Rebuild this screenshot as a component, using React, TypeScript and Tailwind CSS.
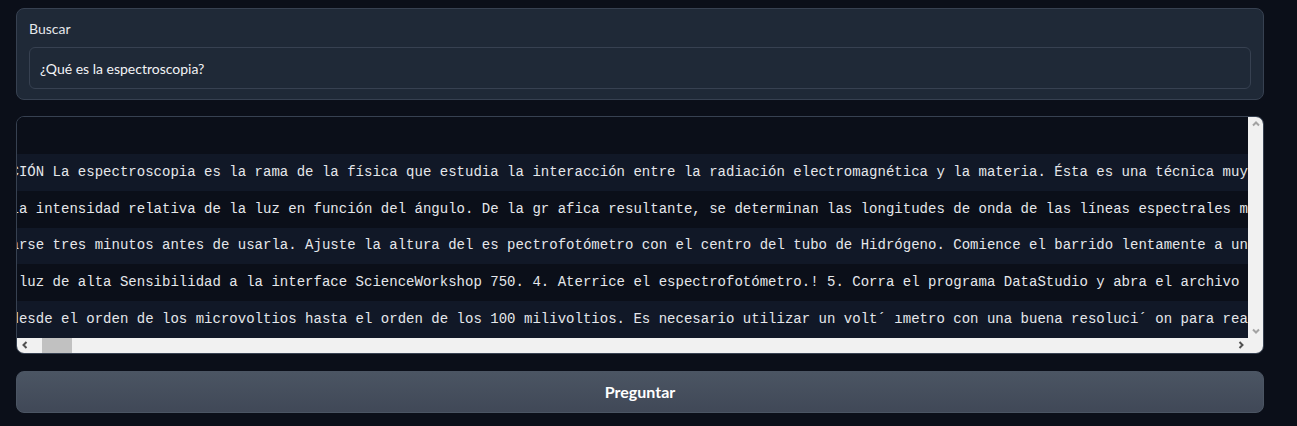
import React from "react";

const rows = [
  "CIÓN La espectroscopia es la rama de la física que estudia la interacción entre la radiación electromagnética y la materia. Ésta es una técnica muy utilizada en la ciencia moderna.",
  "la intensidad relativa de la luz en función del ángulo. De la gr afica resultante, se determinan las longitudes de onda de las líneas espectrales medidas.",
  "arse tres minutos antes de usarla. Ajuste la altura del es pectrofotómetro con el centro del tubo de Hidrógeno. Comience el barrido lentamente a un lado.",
  " luz de alta Sensibilidad a la interface ScienceWorkshop 750. 4. Aterrice el espectrofotómetro.! 5. Corra el programa DataStudio y abra el archivo   de datos.",
  "desde el orden de los microvoltios hasta el orden de los 100 milivoltios. Es necesario utilizar un volt´ ımetro con una buena resoluci´ on para realizar la medida.",
];

function Chevron({ dir, color }: { dir: "up" | "down" | "left" | "right"; color: string }) {
  const pts: Record<string, string> = {
    up: "1,5.5 4,2.5 7,5.5",
    down: "1,2.5 4,5.5 7,2.5",
    left: "5.5,1 2.5,4 5.5,7",
    right: "2.5,1 5.5,4 2.5,7",
  };
  return (
    <svg width="8" height="8" viewBox="0 0 8 8">
      <polyline points={pts[dir]} fill="none" stroke={color} strokeWidth="2" strokeLinejoin="miter" />
    </svg>
  );
}

export default function App() {
  return (
    <div
      className="min-h-[426px] w-full bg-[#0b0f19] pl-4 pr-[33px] pt-2 pb-3 flex flex-col"
      style={{ fontFamily: "Lato, 'Noto Sans', sans-serif" }}
    >
      {/* Search block */}
      <div className="rounded-lg border border-[#374151] bg-[#1f2937] px-3 pt-[10px] pb-[10px]">
        <div className="text-[14px] leading-5 text-[#e5e7eb]">Buscar</div>
        <div className="mt-2 h-[42px] rounded-md border border-[#374151] bg-[#1f2937] px-[10px] flex items-center text-[14px] text-[#f3f4f6]">
          ¿Qué es la espectroscopia?
        </div>
      </div>

      {/* Dataframe */}
      <div className="mt-4 rounded-lg border border-[#374151] overflow-hidden bg-[#0b0f19] flex flex-col">
        <div className="flex">
          <div className="flex-1 overflow-hidden flex flex-col text-[14px] tracking-[0.016px] text-[#e5e7eb] font-['Liberation_Mono',monospace]">
            <div className="h-[37px] bg-[#0b0f19]" />
            {rows.map((t, i) => (
              <div
                key={i}
                className={`h-[36.8px] flex items-center whitespace-pre ${i % 2 === 0 ? "bg-[#111827]" : "bg-[#0b0f19]"}`}
              >
                <span className="-ml-[6.5px]">{t}</span>
              </div>
            ))}
          </div>
          <div className="w-[15px] bg-[#f1f1f1] flex flex-col justify-between items-center py-[3px]">
            <Chevron dir="up" color="#a3a3a3" />
            <Chevron dir="down" color="#a3a3a3" />
          </div>
        </div>
        <div className="h-[15px] bg-[#f1f1f1] flex">
          <div className="flex-1 flex items-center">
            <div className="w-[15px] flex items-center justify-center">
              <Chevron dir="left" color="#505050" />
            </div>
            <div className="ml-[10px] h-[15px] w-[30px] bg-[#c1c1c1]" />
            <div className="flex-1" />
            <div className="w-[15px] flex items-center justify-center">
              <Chevron dir="right" color="#505050" />
            </div>
          </div>
          <div className="w-[15px]" />
        </div>
      </div>

      {/* Button */}
      <button className="mt-[17px] h-[42px] rounded-lg border border-[#4b5563] bg-gradient-to-b from-[#4b5563] to-[#404857] text-white text-[16px] font-bold">
        Preguntar
      </button>
    </div>
  );
}
